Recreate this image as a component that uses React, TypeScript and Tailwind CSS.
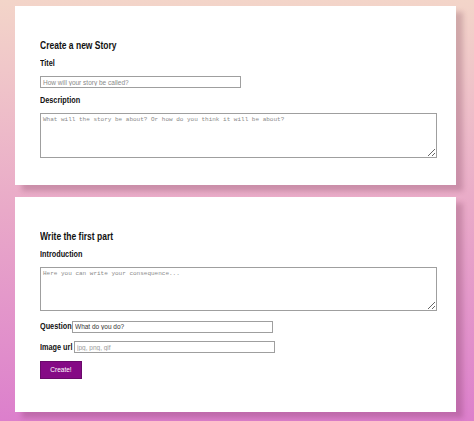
import React from "react";

// no narrow face installed, so squeeze Liberation Sans bold horizontally
const narrow =
  'block w-max whitespace-nowrap origin-left scale-x-[0.81] font-["Liberation_Sans",Arial,sans-serif] font-bold text-[#111]';

function Label({ children }: { children: React.ReactNode }) {
  return <span className={`${narrow} text-[9px] leading-[11px]`}>{children}</span>;
}

function Heading({ children }: { children: React.ReactNode }) {
  return <h2 className={`${narrow} text-[10.5px] leading-[12px]`}>{children}</h2>;
}

const input =
  "block h-[12px] w-[201px] border border-[#9f9f9f] px-[2px] font-['Liberation_Sans',Arial,sans-serif] text-[6.5px] outline-none";
const area =
  "mt-[7.5px] block w-[397px] border border-[#9f9f9f] px-[2px] py-[1px] font-['Liberation_Mono','DejaVu_Sans_Mono',monospace] text-[6px] outline-none placeholder:text-[#8a8a8a]";

export default function App() {
  return (
    <div className="h-[421px] w-full overflow-hidden bg-gradient-to-b from-[#f3d5c9] via-[#e9a9c8] to-[#dc7fcc] pl-[15px] pt-[6px]">
      {/* story card */}
      <div className="w-[441px] bg-white pb-[27px] pl-[25px] pt-[33px] shadow-[7px_6px_5px_rgba(90,30,60,0.22)]">
        <Heading>Create a new Story</Heading>
        <div className="mt-[6.5px]">
          <Label>Titel</Label>
        </div>
        <input
          className={`${input} mt-[7.5px] placeholder:text-[#8a8a8a]`}
          placeholder="How will your story be called?"
        />
        <div className="mt-[6.5px]">
          <Label>Description</Label>
        </div>
        <textarea
          className={`${area} h-[45px]`}
          placeholder="What will the story be about? Or how do you think it will be about?"
        />
      </div>

      {/* first part card */}
      <div className="mt-[12px] w-[441px] bg-white pb-[33px] pl-[25px] pt-[33px] shadow-[7px_6px_5px_rgba(90,30,60,0.22)]">
        <Heading>Write the first part</Heading>
        <div className="mt-[6.5px]">
          <Label>Introduction</Label>
        </div>
        <textarea className={`${area} h-[44px]`} placeholder="Here you can write your consequence..." />
        <div className="mt-[9.5px] flex items-center">
          <div className="w-[32px]">
            <Label>Question</Label>
          </div>
          <input className={`${input} text-[#333]`} defaultValue="What do you do?" />
        </div>
        <div className="mt-[8.5px] flex items-center">
          <div className="w-[34px]">
            <Label>Image url</Label>
          </div>
          <input className={`${input} placeholder:text-[#9a9a9a]`} placeholder="jpg, png, gif" />
        </div>
        <button className="mt-[8px] block h-[17.5px] w-[42px] border border-[#6a0a6a] bg-[#850a85] font-['Liberation_Sans',Arial,sans-serif] text-[6.5px] text-white">
          Create!
        </button>
      </div>
    </div>
  );
}
